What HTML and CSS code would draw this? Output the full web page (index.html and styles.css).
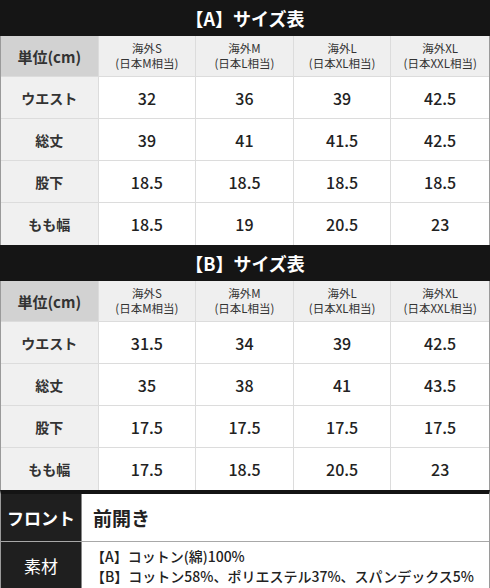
FILE: index.html
```html
<!DOCTYPE html>
<html>
<head>
    <link rel="stylesheet" href="styles.css">
</head>
<body>
    <div class="page">
        <div class="section-title">【A】サイズ表</div>
        <div class="size-table">
            <div class="cell unit">単位(cm)</div>
            <div class="cell head"><span>海外S</span><span>(日本M相当)</span></div>
            <div class="cell head"><span>海外M</span><span>(日本L相当)</span></div>
            <div class="cell head"><span>海外L</span><span>(日本XL相当)</span></div>
            <div class="cell head"><span>海外XL</span><span>(日本XXL相当)</span></div>

            <div class="cell label">ウエスト</div>
            <div class="cell num">32</div>
            <div class="cell num">36</div>
            <div class="cell num">39</div>
            <div class="cell num">42.5</div>

            <div class="cell label">総丈</div>
            <div class="cell num">39</div>
            <div class="cell num">41</div>
            <div class="cell num">41.5</div>
            <div class="cell num">42.5</div>

            <div class="cell label">股下</div>
            <div class="cell num">18.5</div>
            <div class="cell num">18.5</div>
            <div class="cell num">18.5</div>
            <div class="cell num">18.5</div>

            <div class="cell label">もも幅</div>
            <div class="cell num">18.5</div>
            <div class="cell num">19</div>
            <div class="cell num">20.5</div>
            <div class="cell num">23</div>
        </div>

        <div class="section-title">【B】サイズ表</div>
        <div class="size-table">
            <div class="cell unit">単位(cm)</div>
            <div class="cell head"><span>海外S</span><span>(日本M相当)</span></div>
            <div class="cell head"><span>海外M</span><span>(日本L相当)</span></div>
            <div class="cell head"><span>海外L</span><span>(日本XL相当)</span></div>
            <div class="cell head"><span>海外XL</span><span>(日本XXL相当)</span></div>

            <div class="cell label">ウエスト</div>
            <div class="cell num">31.5</div>
            <div class="cell num">34</div>
            <div class="cell num">39</div>
            <div class="cell num">42.5</div>

            <div class="cell label">総丈</div>
            <div class="cell num">35</div>
            <div class="cell num">38</div>
            <div class="cell num">41</div>
            <div class="cell num">43.5</div>

            <div class="cell label">股下</div>
            <div class="cell num">17.5</div>
            <div class="cell num">17.5</div>
            <div class="cell num">17.5</div>
            <div class="cell num">17.5</div>

            <div class="cell label">もも幅</div>
            <div class="cell num">17.5</div>
            <div class="cell num">18.5</div>
            <div class="cell num">20.5</div>
            <div class="cell num">23</div>
        </div>

        <div class="spec">
            <div class="spec-row">
                <div class="spec-label">フロント</div>
                <div class="spec-value big">前開き</div>
            </div>
            <div class="spec-row">
                <div class="spec-label light">素材</div>
                <div class="spec-value lines">
                    <span>【A】コットン(綿)100%</span>
                    <span>【B】コットン58%、ポリエステル37%、スパンデックス5%</span>
                </div>
            </div>
        </div>
    </div>
</body>
</html>
```

FILE: styles.css
```css
body {
    margin: 0;
    font-family: "Noto Sans CJK JP", "Noto Sans", sans-serif;
    color: #222;
    background: #fff;
}

.page {
    width: 490px;
    height: 588px;
    overflow: hidden;
}

.section-title {
    height: 36px;
    background: #151515;
    color: #fff;
    font-size: 18px;
    font-weight: bold;
    display: flex;
    align-items: center;
    justify-content: center;
}

.size-table {
    display: grid;
    grid-template-columns: repeat(5, 1fr);
    border-left: 1px solid #9a9a9a;
    border-right: 1px solid #9a9a9a;
}

.cell {
    box-sizing: border-box;
    height: 42px;
    display: flex;
    align-items: center;
    justify-content: center;
    text-align: center;
    border-right: 1px solid #dcdcdc;
    border-bottom: 1px solid #dcdcdc;
    background: #fff;
}

.cell:nth-child(5n) {
    border-right: none;
}

.cell:nth-last-child(-n+5) {
    border-bottom: none;
}

.unit {
    height: 41px;
    background: #d2d2d2;
    font-size: 15px;
    font-weight: bold;
    color: #333;
}

.head {
    height: 41px;
    background: #efefef;
    flex-direction: column;
    font-size: 11.5px;
    line-height: 16px;
    color: #333;
}

.head span {
    display: block;
    height: 15px;
    line-height: 15px;
}

.label {
    background: #f0f0f0;
    font-size: 14px;
    font-weight: bold;
    color: #333;
}

.num {
    font-size: 16px;
    font-weight: 500;
    color: #222;
}

.spec {
    border-top: 4px solid #141414;
    border-left: 1px solid #9a9a9a;
    border-right: 1px solid #9a9a9a;
}

.spec-row {
    display: flex;
    height: 47px;
}

.spec-row + .spec-row {
    border-top: 1px solid #a8a8a8;
}

.spec-label {
    width: 80px;
    flex-shrink: 0;
    background: #1f1f1f;
    color: #fff;
    font-size: 17px;
    font-weight: bold;
    display: flex;
    align-items: center;
    justify-content: center;
}

.spec-label.light {
    font-weight: normal;
}

.spec-value {
    flex: 1;
    display: flex;
    align-items: center;
    padding-left: 10px;
    font-size: 13.5px;
    font-weight: 500;
    color: #222;
    border-left: 1px solid #888;
}

.spec-value.big {
    padding-left: 11px;
    font-size: 19px;
    font-weight: bold;
}

.spec-value.lines {
    flex-direction: column;
    align-items: flex-start;
    justify-content: center;
    padding-left: 9px;
}

.spec-value.lines span {
    display: block;
    line-height: normal;
    font-size: 14px;
    white-space: nowrap;
}
```
